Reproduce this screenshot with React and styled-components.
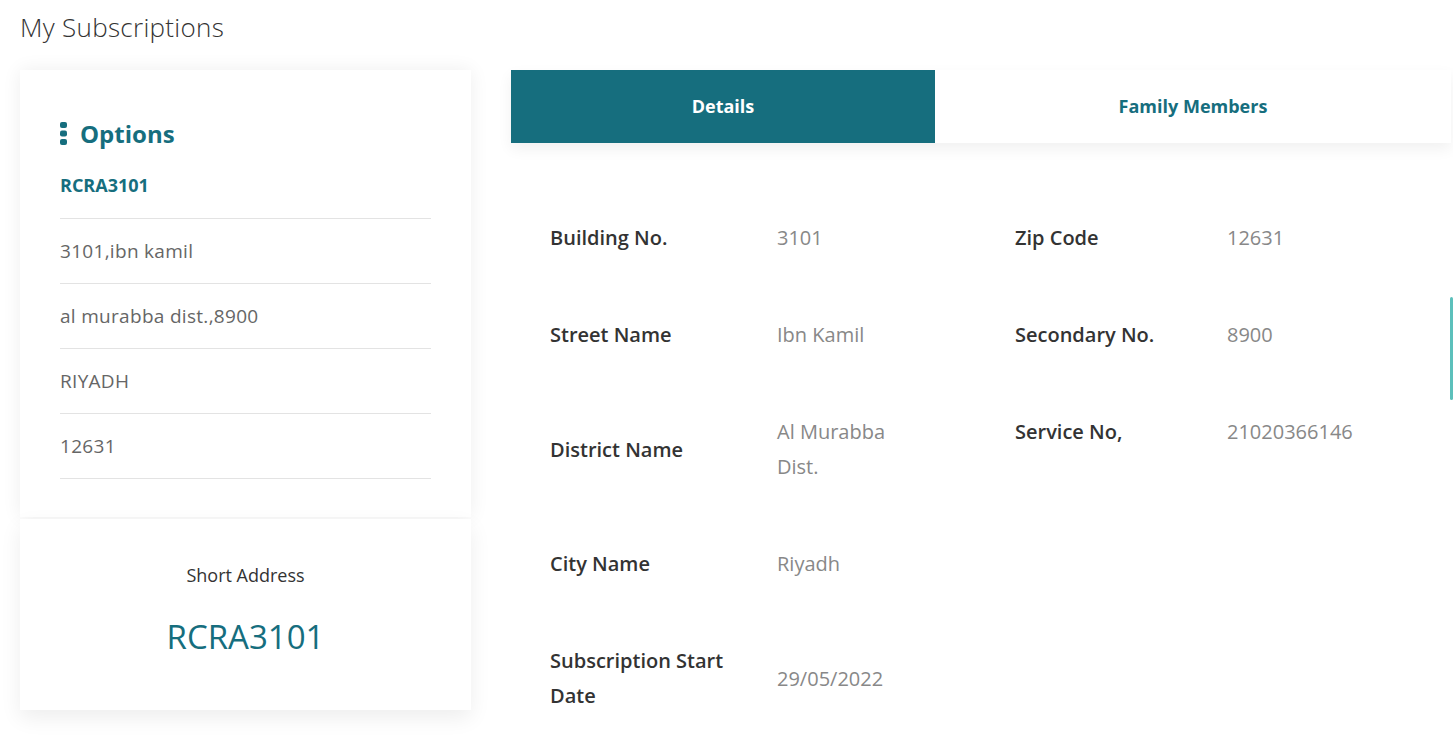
import React from "react";
import styled, { createGlobalStyle } from "styled-components";

const TEAL = "#166e7e";

const GlobalStyle = createGlobalStyle`
  html, body {
    margin: 0;
    padding: 0;
    background: #fff;
    font-family: "Open Sans", Lato, sans-serif;
    overflow: hidden;
  }
  * { box-sizing: border-box; }
`;

const rows = [
  [
    { label: "Building No.", value: "3101" },
    { label: "Zip Code", value: "12631" },
  ],
  [
    { label: "Street Name", value: "Ibn Kamil" },
    { label: "Secondary No.", value: "8900" },
  ],
  [
    { label: "District Name", value: "Al Murabba Dist." },
    { label: "Service No,", value: "21020366146" },
  ],
  [{ label: "City Name", value: "Riyadh" }],
  [{ label: "Subscription Start Date", value: "29/05/2022" }],
];

const addressLines = ["3101,ibn kamil", "al murabba dist.,8900", "RIYADH", "12631"];

const OptionsIcon = () => (
  <svg width="7" height="23" viewBox="0 0 7 23">
    <rect x="0" y="0" width="7" height="6" rx="2" fill={TEAL} />
    <rect x="0" y="8.5" width="7" height="6" rx="2" fill={TEAL} />
    <rect x="0" y="17" width="7" height="6" rx="2" fill={TEAL} />
  </svg>
);

const App = () => {
  return (
    <Page>
      <GlobalStyle />
      <Title>My Subscriptions</Title>

      <Layout>
        {/* Left column */}
        <Side>
          <OptionsCard>
            <OptionsHead>
              <OptionsIcon />
              <span>Options</span>
            </OptionsHead>
            <Code>RCRA3101</Code>
            <AddressList>
              {addressLines.map((line) => (
                <li key={line}>{line}</li>
              ))}
            </AddressList>
          </OptionsCard>

          <ShortCard>
            <ShortLabel>Short Address</ShortLabel>
            <ShortValue>RCRA3101</ShortValue>
          </ShortCard>
        </Side>

        {/* Right column */}
        <Main>
          <Tabs>
            <Tab $active>Details</Tab>
            <Tab>Family Members</Tab>
          </Tabs>

          <DetailGrid>
            {rows.map((row, i) => (
              <React.Fragment key={i}>
                {row.map((f, j) => (
                  <Pair key={f.label}>
                    <Label $w={j === 0 ? 227 : 212}>{f.label}</Label>
                    <Value>{f.value}</Value>
                  </Pair>
                ))}
                {row.length === 1 && <span />}
              </React.Fragment>
            ))}
          </DetailGrid>
        </Main>
      </Layout>

      <ScrollMark />
    </Page>
  );
};

export default App;

const Page = styled.div`
  width: 1453px;
  height: 749px;
  padding: 0 0 0 20px;
  position: relative;
`;

const Title = styled.h1`
  margin: 0;
  padding-top: 9px;
  height: 70px;
  font-size: 26px;
  line-height: 36px;
  font-weight: 300;
  color: #333;
  letter-spacing: 0.3px;
`;

const Layout = styled.div`
  display: flex;
  gap: 40px;
`;

const Side = styled.div`
  width: 451px;
  display: flex;
  flex-direction: column;
  gap: 2px;
`;

const OptionsCard = styled.div`
  background: #fff;
  box-shadow: 0 0 18px rgba(0, 0, 0, 0.07);
  padding: 45px 40px 38px;
`;

const OptionsHead = styled.div`
  display: flex;
  align-items: center;
  gap: 13px;
  color: ${TEAL};
  font-size: 24px;
  font-weight: 700;
  height: 36px;
`;

const Code = styled.div`
  margin-top: 21px;
  padding-bottom: 20px;
  line-height: 26px;
  color: ${TEAL};
  font-size: 18px;
  font-weight: 700;
  border-bottom: 1px solid #e3e3e3;
`;

const AddressList = styled.ul`
  list-style: none;
  margin: 0;
  padding: 0;

  li {
    height: 65px;
    display: flex;
    align-items: center;
    font-size: 19px;
    letter-spacing: 0.3px;
    color: #666;
    border-bottom: 1px solid #e3e3e3;
  }
`;

const ShortCard = styled.div`
  background: #fff;
  box-shadow: 0 8px 20px rgba(0, 0, 0, 0.07);
  height: 191px;
  display: flex;
  flex-direction: column;
  align-items: center;
  padding-top: 43px;
`;

const ShortLabel = styled.div`
  font-size: 18px;
  line-height: 26px;
  color: #333;
  font-weight: 400;
`;

const ShortValue = styled.div`
  margin-top: 27px;
  font-size: 33px;
  line-height: 44px;
  color: ${TEAL};
  font-weight: 400;
`;

const Main = styled.div`
  flex: 1;
  margin-right: 2px;
`;

const Tabs = styled.div`
  display: flex;
  height: 73px;
  box-shadow: 0 6px 14px rgba(0, 0, 0, 0.06);
`;

const Tab = styled.div`
  flex: ${(p) => (p.$active ? "0 0 424px" : "1")};
  display: flex;
  align-items: center;
  justify-content: center;
  padding-bottom: 2px;
  font-size: 18px;
  font-weight: 700;
  background: ${(p) => (p.$active ? TEAL : "#fff")};
  color: ${(p) => (p.$active ? "#fff" : TEAL)};
`;

const DetailGrid = styled.div`
  display: grid;
  grid-template-columns: 465px 1fr;
  align-items: start;
  row-gap: 62px;
  padding: 77px 0 0 39px;
`;

const Pair = styled.div`
  display: flex;
  align-items: center;
`;

const Label = styled.div`
  width: ${(p) => p.$w}px;
  padding-right: 25px;
  font-size: 20px;
  font-weight: 600;
  color: #333;
  line-height: 35px;
`;

const Value = styled.div`
  width: 150px;
  font-size: 20px;
  color: #888;
  line-height: 35px;
`;

const ScrollMark = styled.div`
  position: absolute;
  right: 0;
  top: 297px;
  width: 3px;
  height: 103px;
  border-radius: 2px;
  background: #5cc0bb;
`;
